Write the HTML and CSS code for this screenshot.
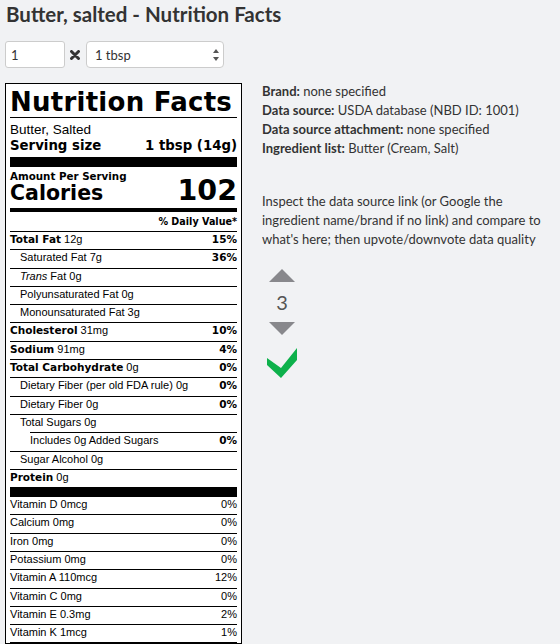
FILE: index.html
```html
<!DOCTYPE html>
<html>
<head>
<meta charset="utf-8">
<link rel="stylesheet" href="styles.css">
</head>
<body>
<h1 class="title">Butter, salted - Nutrition Facts</h1>
<div class="controls">
  <input class="qty" type="text" value="1">
  <svg class="times" viewBox="0 0 10 10" width="10" height="10"><path d="M1.5 1.5L8.5 8.5M8.5 1.5L1.5 8.5" stroke="#333" stroke-width="3" stroke-linecap="round"/></svg>
  <div class="unit">
    <select class="unit-select"><option>1 tbsp</option></select>
    <svg class="arrows" viewBox="0 0 6 14" width="6" height="14"><path d="M0 5L3 1L6 5Z M0 9L3 13L6 9Z" fill="#555"/></svg>
  </div>
</div>
<div class="main">
  <div class="label">
    <div class="nf-title">Nutrition Facts</div>
    <div class="nf-name">Butter, Salted</div>
    <div class="nf-serving"><span>Serving size</span><span>1 tbsp (14g)</span></div>
    <div class="nf-amount">Amount Per Serving</div>
    <div class="nf-cal"><span class="cal-word">Calories</span><span class="cal-num">102</span></div>
    <div class="nf-dv">% Daily Value*</div>
    <div class="row"><span><b>Total Fat</b> 12g</span><b>15%</b></div>
    <div class="row sub"><span>Saturated Fat 7g</span><b>36%</b></div>
    <div class="row sub"><span><i>Trans</i> Fat 0g</span></div>
    <div class="row sub"><span>Polyunsaturated Fat 0g</span></div>
    <div class="row sub"><span>Monounsaturated Fat 3g</span></div>
    <div class="row"><span><b>Cholesterol</b> 31mg</span><b>10%</b></div>
    <div class="row"><span><b>Sodium</b> 91mg</span><b>4%</b></div>
    <div class="row"><span><b>Total Carbohydrate</b> 0g</span><b>0%</b></div>
    <div class="row sub"><span>Dietary Fiber (per old FDA rule) 0g</span><b>0%</b></div>
    <div class="row sub"><span>Dietary Fiber 0g</span><b>0%</b></div>
    <div class="row sub"><span>Total Sugars 0g</span></div>
    <div class="row sub2"><span>Includes 0g Added Sugars</span><b>0%</b></div>
    <div class="row sub"><span>Sugar Alcohol 0g</span></div>
    <div class="row protein"><span><b>Protein</b> 0g</span></div>
    <div class="row vit first"><span>Vitamin D 0mcg</span><span>0%</span></div>
    <div class="row vit"><span>Calcium 0mg</span><span>0%</span></div>
    <div class="row vit"><span>Iron 0mg</span><span>0%</span></div>
    <div class="row vit"><span>Potassium 0mg</span><span>0%</span></div>
    <div class="row vit"><span>Vitamin A 110mcg</span><span>12%</span></div>
    <div class="row vit"><span>Vitamin C 0mg</span><span>0%</span></div>
    <div class="row vit"><span>Vitamin E 0.3mg</span><span>2%</span></div>
    <div class="row vit last"><span>Vitamin K 1mcg</span><span>1%</span></div>
  </div>
  <div class="info">
    <div class="meta"><b>Brand:</b> none specified</div>
    <div class="meta"><b>Data source:</b> USDA database (NBD ID: 1001)</div>
    <div class="meta"><b>Data source attachment:</b> none specified</div>
    <div class="meta"><b>Ingredient list:</b> Butter (Cream, Salt)</div>
    <p class="help">Inspect the data source link (or Google the ingredient name/brand if no link) and compare to what's here; then upvote/downvote data quality</p>
    <div class="vote">
      <svg class="tri" viewBox="0 0 26 13" width="26" height="13"><path d="M0 13L13 0L26 13Z" fill="#88888c"/></svg>
      <div class="count">3</div>
      <svg class="tri" viewBox="0 0 26 13" width="26" height="13"><path d="M0 0L13 13L26 0Z" fill="#88888c"/></svg>
      <svg class="check" viewBox="0 0 30 30" width="30" height="30"><path d="M0 10L14 20L30 0L30 12L14 30L0 17Z" fill="#0db14b"/></svg>
    </div>
  </div>
</div>
</body>
</html>
```
FILE: styles.css
```css
* { box-sizing: border-box; }
html, body { margin: 0; }
body {
  background: #f1f2f4;
  color: #333;
  font-family: Lato, "Liberation Sans", sans-serif;
  padding: 2px 5px 0;
}
.title {
  font-size: 20.5px;
  font-weight: 700;
  line-height: 24px;
  margin: 0 0 15px 1px;
}
.controls {
  display: flex;
  align-items: center;
  height: 27px;
  margin-bottom: 15px;
}
.qty {
  width: 60px;
  height: 27px;
  border: 1px solid #ccc;
  border-radius: 3px;
  background: #fff;
  font: 13px Lato, sans-serif;
  color: #333;
  padding: 0 5px;
  margin: 0;
}
.times { margin: 0 6px 0 5px; }
.unit {
  width: 138px;
  height: 27px;
  border: 1px solid #ccc;
  border-radius: 4px;
  background: #fff;
  display: flex;
  align-items: center;
  padding: 0 4px 0 8px;
}
.unit-select {
  flex: 1;
  appearance: none;
  -webkit-appearance: none;
  border: none;
  background: transparent;
  font: 13px Lato, sans-serif;
  color: #333;
  padding: 0;
  margin: 0;
}
.main {
  display: flex;
  align-items: flex-start;
}
.label {
  width: 237px;
  flex: none;
  border: 1px solid #000;
  background: #fff;
  padding: 3px 4px 0;
  color: #000;
  font-family: "Liberation Sans", Arial, sans-serif;
  font-size: 11px;
}
.nf-title {
  font-family: "DejaVu Sans", sans-serif;
  font-weight: 700;
  font-size: 26px;
  letter-spacing: 0.25px;
  line-height: 30px;
  border-bottom: 1px solid #000;
  white-space: nowrap;
}
.nf-name {
  font-size: 13.5px;
  line-height: 16px;
  padding-top: 4px;
}
.nf-serving {
  display: flex;
  justify-content: space-between;
  font-family: "DejaVu Sans", sans-serif;
  font-weight: 700;
  font-size: 13.3px;
  line-height: 16px;
  padding-bottom: 3px;
  border-bottom: 10px solid #000;
}
.nf-amount {
  font-family: "DejaVu Sans", sans-serif;
  font-weight: 700;
  font-size: 10.3px;
  line-height: 12px;
  padding-top: 3px;
}
.nf-cal {
  display: flex;
  justify-content: space-between;
  align-items: baseline;
  font-family: "DejaVu Sans", sans-serif;
  font-weight: 700;
  line-height: 17px;
  padding-bottom: 6px;
  border-bottom: 4px solid #000;
}
.cal-word { font-size: 20.5px; }
.cal-num { font-size: 28.5px; }
.nf-dv {
  text-align: right;
  font-family: "DejaVu Sans", sans-serif;
  font-weight: 700;
  font-size: 9.6px;
  line-height: 12px;
  padding: 4px 0 3px;
}
.row {
  display: flex;
  justify-content: space-between;
  border-top: 1px solid #000;
  line-height: 15.3px;
  padding-bottom: 2px;
  white-space: nowrap;
}
.row b {
  font-family: "DejaVu Sans", sans-serif;
  font-weight: 700;
  font-size: 10.5px;
}
.sub { padding-left: 10px; }
.sub2 { margin-left: 20px; }
.protein { border-bottom: 10px solid #000; }
.vit.first { border-top: none; }
.vit.last { border-bottom: 1px solid #000; padding-bottom: 1px; }
.info {
  margin: -1px 0 0 20px;
  width: 293px;
  font-size: 13px;
  color: #333;
}
.meta { line-height: 19px; }
.help {
  margin: 34px 0 0;
  line-height: 19.2px;
}
.vote {
  display: flex;
  flex-direction: column;
  align-items: center;
  width: 32px;
  margin: 19.6px 0 0 4px;
}
.count {
  font-size: 20px;
  line-height: 24px;
  color: #555;
  margin: 8px 0;
}
.check { margin-top: 12.5px; }
```
